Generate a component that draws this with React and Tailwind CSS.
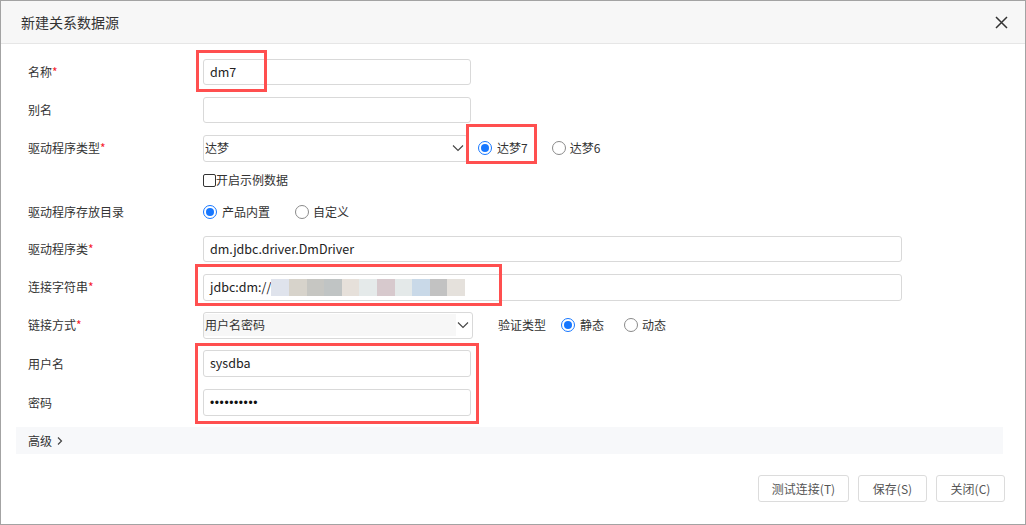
import React from "react";

const font = { fontFamily: '"Noto Sans CJK SC", "Liberation Sans", sans-serif' };

function Label({ text, req }) {
  return (
    <div className="w-[175px] shrink-0 text-[12px] text-[#333]">
      {text}
      {req && <span className="text-[#f5222d]">*</span>}
    </div>
  );
}

function Radio({ checked, label, gap = "ml-[5px]" }) {
  return (
    <div className="flex items-center">
      {checked ? (
        <span className="w-[14px] h-[14px] rounded-full border border-[#1677ff] flex items-center justify-center bg-white">
          <span className="w-[8px] h-[8px] rounded-full bg-[#1677ff]" />
        </span>
      ) : (
        <span className="w-[14px] h-[14px] rounded-full border border-[#8a8a8a] bg-white" />
      )}
      <span className={`${gap} text-[12px] text-[#333]`}>{label}</span>
    </div>
  );
}

function Chevron() {
  return (
    <svg width="12" height="8" viewBox="0 0 12 8" className="shrink-0">
      <path d="M1 1.5 L6 6.5 L11 1.5" fill="none" stroke="#444" strokeWidth="1.1" />
    </svg>
  );
}

const blocks = [
  "#dfe3ec", "#d7d3cb", "#c6c6c2", "#c0c4c4", "#e6e0da", "#e5eaea",
  "#d7c9cd", "#e4e9e9", "#c9d9e8", "#c2c2c2", "#e5e1dc",
];

export default function App() {
  return (
    <div style={font} className="relative w-[1026px] h-[525px] bg-white border border-[#a3a3a3] overflow-hidden">
      {/* header */}
      <div className="h-[43px] bg-[#f7f7f7] border-b border-[#e6e6e6] flex items-center justify-between pl-[20px] pr-[17px]">
        <span className="text-[14px] text-[#333]">新建关系数据源</span>
        <svg width="13" height="13" viewBox="0 0 13 13">
          <path d="M1 1 L12 12 M12 1 L1 12" stroke="#333" strokeWidth="1.5" />
        </svg>
      </div>

      <div className="pt-[9px]">
        <div className="pl-[27px]">
          {/* 名称 */}
          <div className="h-[38px] flex items-center">
            <Label text="名称" req />
            <div className="w-[268px] h-[26px] border border-[#d9d9d9] rounded-[3px] flex items-center px-[6px] text-[12.5px] text-[#222]">
              dm7
            </div>
          </div>
          {/* 别名 */}
          <div className="h-[38px] flex items-center">
            <Label text="别名" />
            <div className="w-[268px] h-[26px] border border-[#d9d9d9] rounded-[3px]" />
          </div>
          {/* 驱动程序类型 */}
          <div className="h-[38px] flex items-center">
            <Label text="驱动程序类型" req />
            <div className="w-[265px] h-[27px] border border-[#d9d9d9] rounded-[3px] flex items-center justify-between pl-[1px] pr-[3px] text-[12px] text-[#333]">
              <span>达梦</span>
              <Chevron />
            </div>
            <div className="ml-[10px]">
              <Radio checked label="达梦7" />
            </div>
            <div className="ml-[24px]">
              <Radio label="达梦6" gap="ml-[4px]" />
            </div>
          </div>
          {/* checkbox */}
          <div className="h-[26px] flex items-center">
            <div className="w-[175px]" />
            <span className="w-[13px] h-[13px] border border-[#333] rounded-[2px] bg-white" />
            <span className="text-[12px] text-[#333]">开启示例数据</span>
          </div>
          {/* 驱动程序存放目录 */}
          <div className="h-[37px] flex items-center">
            <Label text="驱动程序存放目录" />
            <Radio checked label="产品内置" />
            <div className="ml-[25px]">
              <Radio label="自定义" gap="ml-[4px]" />
            </div>
          </div>
          {/* 驱动程序类 */}
          <div className="h-[38px] flex items-center">
            <Label text="驱动程序类" req />
            <div className="w-[699px] h-[26px] border border-[#d9d9d9] rounded-[3px] flex items-center px-[6px] text-[12.5px] text-[#222]">
              dm.jdbc.driver.DmDriver
            </div>
          </div>
          {/* 连接字符串 */}
          <div className="h-[38px] flex items-center">
            <Label text="连接字符串" req />
            <div className="w-[699px] h-[27px] border border-[#d9d9d9] rounded-[3px] flex items-center px-[6px] text-[12.5px] text-[#222]">
              <span>jdbc:dm://</span>
              <div className="flex h-[17px]">
                {blocks.map((c, i) => (
                  <div key={i} className="w-[17.6px] h-full" style={{ backgroundColor: c }} />
                ))}
              </div>
            </div>
          </div>
          {/* 链接方式 */}
          <div className="h-[38px] flex items-center">
            <Label text="链接方式" req />
            <div className="w-[270px] h-[27px] border border-[#d9d9d9] rounded-[3px] flex items-center justify-between pr-[3px] text-[12px] text-[#333]">
              <div className="w-[252px] h-[22px] bg-[#f7f7f7] flex items-center pl-[1px]">用户名密码</div>
              <Chevron />
            </div>
            <span className="ml-[25px] text-[12px] text-[#333]">验证类型</span>
            <div className="ml-[15px]">
              <Radio checked label="静态" />
            </div>
            <div className="ml-[20px]">
              <Radio label="动态" gap="ml-[4px]" />
            </div>
          </div>
          {/* 用户名 */}
          <div className="h-[39px] flex items-center">
            <Label text="用户名" />
            <div className="w-[268px] h-[27px] border border-[#d9d9d9] rounded-[3px] flex items-center px-[6px] text-[12.5px] text-[#222]">
              sysdba
            </div>
          </div>
          {/* 密码 */}
          <div className="h-[39px] flex items-center">
            <Label text="密码" />
            <div
              style={{ fontFamily: '"Liberation Sans", Arial, sans-serif' }}
              className="w-[268px] h-[27px] border border-[#d9d9d9] rounded-[3px] flex items-center px-[6px] text-[12px] text-[#111] tracking-[0.6px]"
            >
              ••••••••••
            </div>
          </div>
        </div>

        {/* 高级 */}
        <div className="mt-[5px] ml-[15px] w-[987px] h-[27px] bg-[#f7f8fa] flex items-center pl-[12px] text-[12px] text-[#333]">
          <span>高级</span>
          <svg width="8" height="10" viewBox="0 0 8 10" className="ml-[4px]">
            <path d="M2 1.5 L5.5 5 L2 8.5" fill="none" stroke="#444" strokeWidth="1.2" />
          </svg>
        </div>

        {/* footer */}
        <div className="mt-[21px] flex justify-end pr-[20px] gap-[9px]">
          <div className="w-[91px] h-[27px] border border-[#dcdcdc] rounded-[3px] flex items-center justify-center text-[12px] text-[#555]">测试连接(T)</div>
          <div className="w-[69px] h-[27px] border border-[#dcdcdc] rounded-[3px] flex items-center justify-center text-[12px] text-[#555]">保存(S)</div>
          <div className="w-[69px] h-[27px] border border-[#dcdcdc] rounded-[3px] flex items-center justify-center text-[12px] text-[#555]">关闭(C)</div>
        </div>
      </div>

      {/* annotation boxes */}
      <div className="absolute left-[195px] top-[49px] w-[71px] h-[42px] border-[3px] border-[#ff4f4f] pointer-events-none" />
      <div className="absolute left-[465px] top-[123px] w-[71px] h-[40px] border-[3px] border-[#ff4f4f] pointer-events-none" />
      <div className="absolute left-[194px] top-[263px] w-[307px] h-[42px] border-[3px] border-[#ff4f4f] pointer-events-none" />
      <div className="absolute left-[194px] top-[342px] w-[284px] h-[81px] border-[3px] border-[#ff4f4f] pointer-events-none" />
    </div>
  );
}
